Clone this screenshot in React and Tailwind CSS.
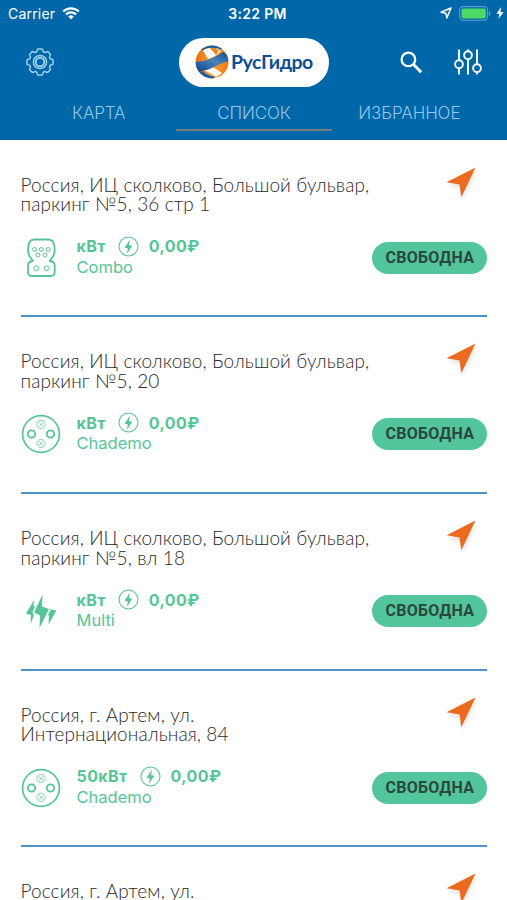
import React, { useState } from 'react';

const TABS = ['КАРТА', 'СПИСОК', 'ИЗБРАННОЕ'];

const STATIONS = [
  {
    id: 1,
    lines: ['Россия, ИЦ сколково, Большой бульвар,', 'паркинг №5, 36 стр 1'],
    power: 'кВт',
    price: '0,00₽',
    connector: 'Combo',
  },
  {
    id: 2,
    lines: ['Россия, ИЦ сколково, Большой бульвар,', 'паркинг №5, 20'],
    power: 'кВт',
    price: '0,00₽',
    connector: 'Chademo',
  },
  {
    id: 3,
    lines: ['Россия, ИЦ сколково, Большой бульвар,', 'паркинг №5, вл 18'],
    power: 'кВт',
    price: '0,00₽',
    connector: 'Multi',
  },
  {
    id: 4,
    lines: ['Россия, г. Артем, ул.', 'Интернациональная, 84'],
    power: '50кВт',
    price: '0,00₽',
    connector: 'Chademo',
  },
  {
    id: 5,
    lines: ['Россия, г. Артем, ул.'],
    power: '50кВт',
    price: '0,00₽',
    connector: 'Chademo',
  },
];

const WifiIcon = () => (
  <svg className="w-[18px] h-[13px]" viewBox="0 0 18 13" fill="none" stroke="white">
    <path d="M1.2 4.6a11 11 0 0 1 15.6 0" strokeWidth="2.1" />
    <path d="M3.9 7.5a7.2 7.2 0 0 1 10.2 0" strokeWidth="2.1" />
    <path d="M9 12.4 6.2 9.6a4 4 0 0 1 5.6 0z" fill="white" stroke="none" />
  </svg>
);

const StatusBar = () => (
  <div className="h-7 pl-2 pr-[3px] grid grid-cols-3 items-center text-white">
    <div className="flex items-center gap-[7px] -mt-[2px]">
      <span className="text-[14px] tracking-[0.2px]">Carrier</span>
      <WifiIcon />
    </div>
    <span className="text-center text-[14px] font-semibold tracking-[0.3px] pl-[3px] -mt-[2px]">
      3:22 PM
    </span>
    <div className="flex items-center justify-end -mt-[2px]">
      <svg className="w-3 h-3 mr-[7px]" viewBox="0 0 12 12" fill="none" stroke="white" strokeWidth="1.5" strokeLinejoin="round">
        <path d="M11 1 1 5.3l4.9.9L6.8 11z" />
      </svg>
      <svg className="w-8 h-[15px] mr-[5px]" viewBox="0 0 32 15">
        <rect x="0.6" y="0.6" width="28" height="13.6" rx="3.6" fill="none" stroke="#5d9fc9" strokeWidth="1.1" />
        <rect x="2.4" y="2.4" width="24.4" height="10" rx="1.8" fill="#4cd964" />
        <path d="M30 5v5q1.6-.8 1.6-2.5T30 5z" fill="#5d9fc9" />
      </svg>
      <svg className="w-2 h-3" viewBox="0 0 8 12" fill="white">
        <path d="M5.2 0 .4 6.8h3L2.4 12l5.2-7.1H4.5z" />
      </svg>
    </div>
  </div>
);

const GearIcon = () => (
  <svg className="w-7 h-7" viewBox="0 0 28 28" fill="none" stroke="#9fd0f0">
    <path
      strokeWidth="1.5"
      strokeLinejoin="round"
      d="M12 1h4q.6 0 .7 1.200.2 1.600 1.400 2.100t2.300-.4q.9-.7 1.600 0l2.100 2.100q.7.7 0 1.600-.9 1.200-.4 2.300t2.100 1.400Q27 11.400 27 12v4q0 .6-1.200.7-1.600.2-2.100 1.400t.4 2.300q.7.9 0 1.600L22 24.100q-.7.7-1.600 0-1.200-.9-2.300-.4t-1.400 2.100Q16.600 27 16 27h-4q-.6 0-.7-1.200-.2-1.600-1.400-2.100t-2.300.4q-.9.7-1.600 0L3.900 22q-.7-.7 0-1.600.9-1.200.4-2.300t-2.100-1.400Q1 16.600 1 16v-4q0-.6 1.200-.7 1.600-.2 2.100-1.400t-.4-2.300q-.7-.9 0-1.600L6 3.900q.7-.7 1.600 0 1.200.9 2.300.4t1.400-2.100Q11.400 1 12 1z"
    />
    <circle cx="14" cy="14" r="6.6" strokeWidth="1.5" />
    <circle cx="14" cy="14" r="4.3" strokeWidth="1.9" />
  </svg>
);

const Logo = () => (
  <div className="w-[150px] h-[49px] rounded-full bg-white flex items-center pl-4 gap-[2px]">
    <svg className="w-[34px] h-[34px] shrink-0" viewBox="0 0 34 34">
      <defs>
        <clipPath id="globe">
          <circle cx="17" cy="17" r="16.4" />
        </clipPath>
        <linearGradient id="band" x1="0" y1="1" x2="1" y2="0">
          <stop offset="0" stopColor="#0a4387" />
          <stop offset="0.55" stopColor="#4b83bb" />
          <stop offset="1" stopColor="#0c4a90" />
        </linearGradient>
        <linearGradient id="ribbon" x1="0" y1="0" x2="1" y2="0">
          <stop offset="0" stopColor="#e5680f" />
          <stop offset="0.5" stopColor="#ffa53c" />
          <stop offset="1" stopColor="#ee7210" />
        </linearGradient>
      </defs>
      <g clipPath="url(#globe)">
        <rect width="34" height="34" fill="url(#ribbon)" />
        <path d="M5 5Q16-4 28 3l-3 1.500Q16 1 8 5z" fill="#1762a5" />
        <path d="M8 5.500Q12 3 15 3l5 4 2-4 4 3-6 5-7 3z" fill="white" />
        <path d="M15 3q5 0 9 2l-3 5z" fill="#f28320" />
        <path d="M9.500 25.500l8-3.500 9.500 6-6 4-4-3z" fill="white" />
        <path d="M3 26l5 .5q6 5 12 5l-2 3H10z" fill="#1762a5" />
        <path d="M0 17Q8 17 16 13.500T28 7Q33 9 34 16 28 17 21 21T4 26.500Q0 23 0 17z" fill="url(#band)" />
      </g>
    </svg>
    <span className="font-['Lato','Open_Sans',sans-serif] font-bold text-[19.5px] leading-6 tracking-[-0.5px] text-[#0d4f93]">
      РусГидро
    </span>
  </div>
);

const SearchIcon = () => (
  <svg className="w-[23px] h-[23px]" viewBox="0 0 23 23" fill="none" stroke="white">
    <circle cx="8.4" cy="8.4" r="6.8" strokeWidth="2.3" />
    <path d="m13.3 13.3 7.9 7.9" strokeWidth="2.9" />
  </svg>
);

const FilterIcon = () => (
  <svg className="w-7 h-[26px]" viewBox="0 0 28 26" fill="none" stroke="white" strokeWidth="1.9">
    <path d="M5 .5v10.700M5 19.200v6.300M14 .5v1.700M14 10.200v15.300M23 .5v14.700M23 23.200v2.300" />
    <circle cx="5" cy="15.2" r="3.9" />
    <circle cx="14" cy="6.2" r="3.9" />
    <circle cx="23" cy="19.2" r="3.9" />
  </svg>
);

const ConnectorIcon = ({ type }) => {
  if (type === 'Combo') {
    return (
      <svg className="w-10 h-10" viewBox="0 0 40 40" fill="none" stroke="#56c596" strokeWidth="1.8">
        <path
          strokeLinejoin="round"
          d="M13 1.500h14.500q3 0 4.500 2.500 1.700 3 1.700 7.500 0 5.500-3.200 9L28.700 23q5 .5 5 4.500v6.500q0 4-4 4h-18.700q-4 0-4-4v-6.500q0-4 5-4.500l-1.800-2.500q-3.200-3.500-3.200-9 0-4.500 1.700-7.500 1.500-2.500 4.300-2.500z"
        />
        <g strokeWidth="1">
          <circle cx="13.500" cy="11.500" r="2" />
          <circle cx="20.300" cy="11.500" r="2" />
          <circle cx="27.200" cy="11.500" r="2" />
          <circle cx="17" cy="17" r="2" />
          <circle cx="24" cy="17" r="2" />
          <circle cx="15.200" cy="30.300" r="2.500" />
          <circle cx="25.700" cy="30.300" r="2.500" />
        </g>
      </svg>
    );
  }

  if (type === 'Multi') {
    return (
      <svg className="w-10 h-10" viewBox="0 0 40 40" fill="#56c596">
        <path d="M21.500 3.500 13 21.500l6 3-.5 12.500 9.500-19-7-2.500z" />
        <path d="M13 9 5 22.500l5 1.500-.5 9 3.500-8.500-1.500-3.500 2.500-6-1.500-.5z" />
        <path d="m28.500 9.500-.5 8.500 7.500 1.500L27.500 33.500l.5-8.500-1-1 3-6-2-.5z" />
      </svg>
    );
  }

  return (
    <svg className="w-10 h-10" viewBox="0 0 40 40" fill="none" stroke="#56c596">
      <circle cx="20" cy="20" r="18.4" strokeWidth="1.7" />
      <circle cx="10.5" cy="20" r="3.7" strokeWidth="1.8" />
      <circle cx="29.5" cy="20" r="3.7" strokeWidth="1.8" />
      <g strokeWidth="0.7">
        <circle cx="20" cy="10.5" r="4.2" />
        <circle cx="20" cy="29.5" r="4.2" />
        <path d="m17.700 8.200 4.600 4.600m0-4.600-4.600 4.600m0 14.400 4.600 4.600m0-4.600-4.600 4.600" />
      </g>
    </svg>
  );
};

const BoltIcon = () => (
  <svg className="w-[21px] h-[21px]" viewBox="0 0 21 21">
    <circle cx="10.5" cy="10.5" r="9.5" fill="none" stroke="#56c596" strokeWidth="1.1" />
    <path d="M11.900 3.500 6.600 11.700l3.200.6-.8 5.400 5.300-7.900-3.200-.6z" fill="#56c596" />
  </svg>
);

const NavigateIcon = () => (
  <svg
    className="w-[30px] h-[31px] drop-shadow-[1px_3px_2px_rgba(0,0,0,0.12)]"
    viewBox="0 0 30 31"
    fill="#ea6b20"
  >
    <path d="M29.500.5.500 15.200l13 2.300 1.800 12.700z" />
  </svg>
);

const StationRow = ({ station }) => (
  <li className="h-[176.7px] shrink-0 border-b-2 border-[#4b93c4] pt-[26px] flex justify-between">
    <div>
      <p className="pt-2 text-[19px] leading-[19.5px] tracking-[0.1px] font-light text-[#2a2a2a] whitespace-nowrap font-['Lato',sans-serif]">
        {station.lines.map((line) => (
          <span key={line} className="block">
            {line}
          </span>
        ))}
      </p>
      <div className="mt-[22px] flex text-[#56c596]">
        <div className="pt-[2px]">
          <ConnectorIcon type={station.connector} />
        </div>
        <div className="ml-4">
          <div className="flex items-center h-[21px] text-[16px] font-bold tracking-[0.4px]">
            <span>{station.power}</span>
            <span className="ml-3 mr-[10px]">
              <BoltIcon />
            </span>
            <span>{station.price}</span>
          </div>
          <p className="text-[16.5px] leading-[21px]">{station.connector}</p>
        </div>
      </div>
    </div>
    <div className="flex flex-col items-end">
      <span className="mr-[11px]">
        <NavigateIcon />
      </span>
      <button
        type="button"
        className="mt-11 w-[115px] h-8 rounded-full bg-[#53c59b] text-[#2b4740] font-['Roboto',sans-serif] text-[16px] font-bold tracking-[0.25px]"
      >
        СВОБОДНА
      </button>
    </div>
  </li>
);

export default function App() {
  const [activeTab, setActiveTab] = useState('СПИСОК');

  return (
    <div className="w-full h-screen overflow-hidden flex flex-col bg-white font-['Inter',sans-serif]">
      <header className="h-[140px] shrink-0 bg-[#0067a9]">
        <StatusBar />
        <div className="h-[68px] pl-[26px] pr-[25px] grid grid-cols-[1fr_150px_1fr] items-center">
          <button type="button" className="w-7">
            <GearIcon />
          </button>
          <Logo />
          <div className="flex items-center justify-end gap-[31px]">
            <SearchIcon />
            <FilterIcon />
          </div>
        </div>
        <nav className="ml-[21px] mr-5 h-[35px] grid grid-cols-3">
          {TABS.map((tab) => (
            <button
              key={tab}
              type="button"
              onClick={() => setActiveTab(tab)}
              className={`border-b-2 pt-[1px] text-[17px] leading-[32px] tracking-[-0.1px] font-light text-[#94c6e6] ${
                activeTab === tab ? 'border-[#777b7e]' : 'border-transparent'
              }`}
            >
              {tab}
            </button>
          ))}
        </nav>
      </header>
      <ul className="flex-1 min-h-0 overflow-hidden pl-[20.5px] pr-[19.6px] flex flex-col pt-[0.7px]">
        {STATIONS.map((station) => (
          <StationRow key={station.id} station={station} />
        ))}
      </ul>
    </div>
  );
}
